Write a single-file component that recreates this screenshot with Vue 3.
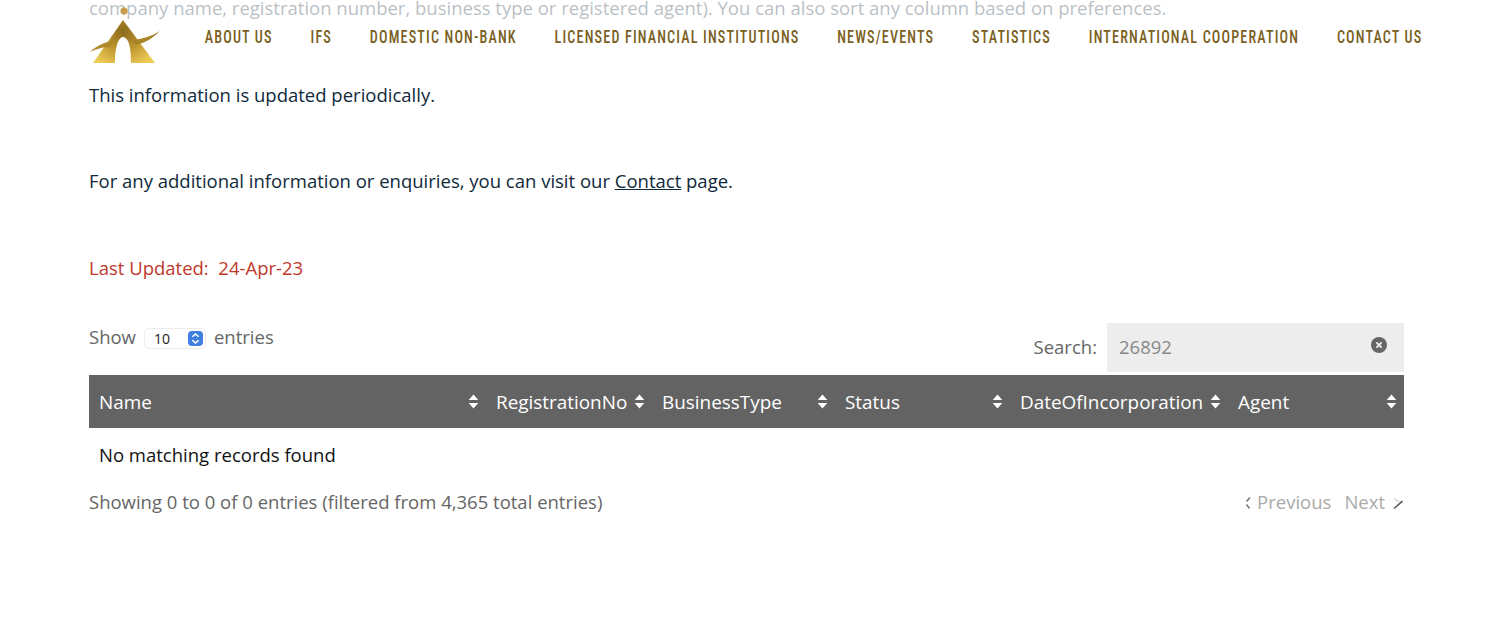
<template>
  <div class="page">
    <header class="topbar">
      <svg class="logo" viewBox="0 0 72 60" aria-hidden="true">
        <defs>
          <radialGradient id="gold" gradientUnits="userSpaceOnUse" cx="34" cy="26" r="38">
            <stop offset="0" stop-color="#8a6a1c" />
            <stop offset="0.45" stop-color="#b8902c" />
            <stop offset="1" stop-color="#eccb55" />
          </radialGradient>
        </defs>
        <circle cx="35" cy="6" r="3.6" fill="#c99c4c" />
        <path fill="url(#gold)" d="M34 15 L66 58 L42 58 C42 46 41 33 34 32 C28 33 26 46 26 58 L4 58 Z" />
        <path fill="#b08a28" d="M1 47 C7 41 15 37 25 36 L21 42 C13 42 7 44 1 47 Z" />
        <path fill="#a88426" d="M71 26 C64 33 56 38 47 40 L43 35 C54 34 63 31 71 26 Z" />
      </svg>
      <nav class="menu">
        <a v-for="item in menu" :key="item" class="menu-item">{{ item }}</a>
      </nav>
    </header>

    <main class="content">
      <div class="intro">
        <p>company name, registration number, business type or registered agent). You can also sort any column based on preferences.</p>
        <p>This information is updated periodically.</p>
        <p>For any additional information or enquiries, you can visit our <a class="link">Contact</a> page.</p>
        <p class="updated">Last Updated:&nbsp; 24-Apr-23</p>
      </div>

      <div class="controls">
        <label class="length">
          Show
          <span class="select">
            <span>10</span>
            <span class="stepper">
              <svg viewBox="0 0 10 12" aria-hidden="true">
                <path d="M2.5 4.6 5 2.4l2.5 2.2M2.5 7.4 5 9.6l2.5-2.2" fill="none" stroke="#fff" stroke-width="1.3" />
              </svg>
            </span>
          </span>
          entries
        </label>
        <label class="search">
          <span class="search-label">Search:</span>
          <span class="search-box">
            <span>26892</span>
            <svg class="clear" viewBox="0 0 16 16" aria-hidden="true">
              <circle cx="8" cy="8" r="8" fill="#666" />
              <path d="M5.4 5.4l5.2 5.2M10.6 5.4l-5.2 5.2" stroke="#eee" stroke-width="1.8" />
            </svg>
          </span>
        </label>
      </div>

      <table class="records">
        <colgroup>
          <col v-for="col in columns" :key="col.name" :style="{ width: col.width + 'px' }" />
        </colgroup>
        <thead>
          <tr>
            <th v-for="col in columns" :key="col.name">
              {{ col.name }}
              <svg class="sort" viewBox="0 0 10 14" aria-hidden="true">
                <path d="M5 0.5 9.5 5.6H0.5ZM5 13.5 0.5 8.4H9.5Z" fill="#fff" />
              </svg>
            </th>
          </tr>
        </thead>
        <tbody>
          <tr>
            <td colspan="6">No matching records found</td>
          </tr>
        </tbody>
      </table>

      <div class="table-foot">
        <span>Showing 0 to 0 of 0 entries (filtered from 4,365 total entries)</span>
        <span class="pager">
          <svg class="arrow prev-arrow" viewBox="0 0 10 14" aria-hidden="true">
            <path d="M8 1.5 4.5 5.5" fill="none" stroke="#777" stroke-width="1.6" />
            <path d="M4.5 8.5l3 4" fill="none" stroke="#777" stroke-width="1.6" />
          </svg>
          <span>Previous</span>
          <span class="next">Next</span>
          <svg class="arrow next-arrow" viewBox="0 0 10 14" aria-hidden="true">
            <path d="M1 2.5 6 6" fill="none" stroke="#ddd" stroke-width="1.6" />
            <path d="M1 12.5 9.5 5" fill="none" stroke="#555" stroke-width="1.6" />
          </svg>
        </span>
      </div>
    </main>
  </div>
</template>

<script setup>
const menu = [
  'ABOUT US',
  'IFS',
  'DOMESTIC NON-BANK',
  'LICENSED FINANCIAL INSTITUTIONS',
  'NEWS/EVENTS',
  'STATISTICS',
  'INTERNATIONAL COOPERATION',
  'CONTACT US'
]

const columns = [
  { name: 'Name', width: 397 },
  { name: 'RegistrationNo', width: 166 },
  { name: 'BusinessType', width: 183 },
  { name: 'Status', width: 175 },
  { name: 'DateOfIncorporation', width: 218 },
  { name: 'Agent', width: 176 }
]
</script>

<style>
html,
body {
  margin: 0;
  background: #fff;
}
</style>

<style scoped>
.page {
  position: relative;
  height: 623px;
  overflow: hidden;
  font-family: "Open Sans", "Liberation Sans", sans-serif;
  font-size: 18.5px;
  color: #666;
}

.topbar {
  position: absolute;
  top: 0;
  left: 0;
  right: 0;
  height: 84px;
  box-sizing: border-box;
  padding-left: 89px;
  background: linear-gradient(rgba(255, 255, 255, 0.7) 0, rgba(255, 255, 255, 0.7) 20px, #fff 21px);
}

.logo {
  display: block;
  width: 72px;
  height: 60px;
  margin-top: 5px;
}

/* squeezed sideways, no condensed face is installed */
.menu {
  position: absolute;
  top: 26px;
  right: 78px;
  display: flex;
  gap: 50.8px;
  transform: scaleX(0.745);
  transform-origin: right center;
}

.menu-item {
  font-family: "Roboto", "Liberation Sans", sans-serif;
  font-size: 19px;
  font-stretch: condensed;
  line-height: 22px;
  font-weight: 500;
  letter-spacing: 1.55px;
  color: #7a5f1e;
  white-space: nowrap;
}

.content {
  padding: 0 96px 0 89px;
}

.intro {
  margin-top: -5.4px;
  color: #0f2a3a;
}

.intro p {
  margin: 0 0 60px;
  line-height: 26.5px;
}

.intro p:first-child {
  margin-bottom: 60.5px;
}

.link {
  color: inherit;
  text-decoration: underline;
}

.updated {
  color: #c0392b;
}

.controls {
  margin-top: -18.6px;
  display: flex;
  justify-content: space-between;
  align-items: flex-start;
  height: 52px;
}

.length {
  display: flex;
  align-items: center;
  gap: 8px;
  margin-top: 2px;
  height: 24px;
}

.select {
  box-sizing: border-box;
  width: 62px;
  height: 21px;
  margin-top: 3px;
  padding: 0 2px 0 9px;
  display: flex;
  align-items: center;
  justify-content: space-between;
  border: 1px solid #ececec;
  border-radius: 5px;
  font-size: 14px;
  color: #222;
}

.stepper {
  width: 15px;
  height: 15px;
  border-radius: 4px;
  background: #3f7fe0;
  display: flex;
}

.stepper svg {
  width: 100%;
  height: 100%;
}

.search {
  display: flex;
  align-items: center;
  gap: 10px;
}

.search-label {
  margin-top: -2px;
}

.search-box {
  box-sizing: border-box;
  width: 297px;
  height: 49px;
  padding: 0 17px 2px 12px;
  display: flex;
  align-items: center;
  justify-content: space-between;
  background: #ededed;
  color: #888;
}

.clear {
  width: 16px;
  height: 16px;
  margin-top: -2px;
}

.records {
  width: 1315px;
  table-layout: fixed;
  border-collapse: collapse;
}

.records th {
  position: relative;
  height: 53px;
  padding: 2px 10px 0;
  box-sizing: border-box;
  background: #636363;
  color: #fff;
  font-size: 18.9px;
  font-weight: 400;
  text-align: left;
  white-space: nowrap;
}

.sort {
  position: absolute;
  top: 19px;
  right: 7px;
  width: 11px;
  height: 15px;
}

.records td {
  height: 55px;
  padding: 0 10px 2px;
  box-sizing: border-box;
  color: #111;
}

.table-foot {
  display: flex;
  justify-content: space-between;
  align-items: center;
  margin-top: 6px;
  height: 26px;
}

.pager {
  display: flex;
  align-items: center;
  color: #aaa;
}

.next {
  margin-left: 13px;
}

.arrow {
  width: 10px;
  height: 14px;
  margin-top: 2px;
}

.prev-arrow {
  margin-right: 5px;
}

.next-arrow {
  margin: 2px 1px 0 8px;
}
</style>
